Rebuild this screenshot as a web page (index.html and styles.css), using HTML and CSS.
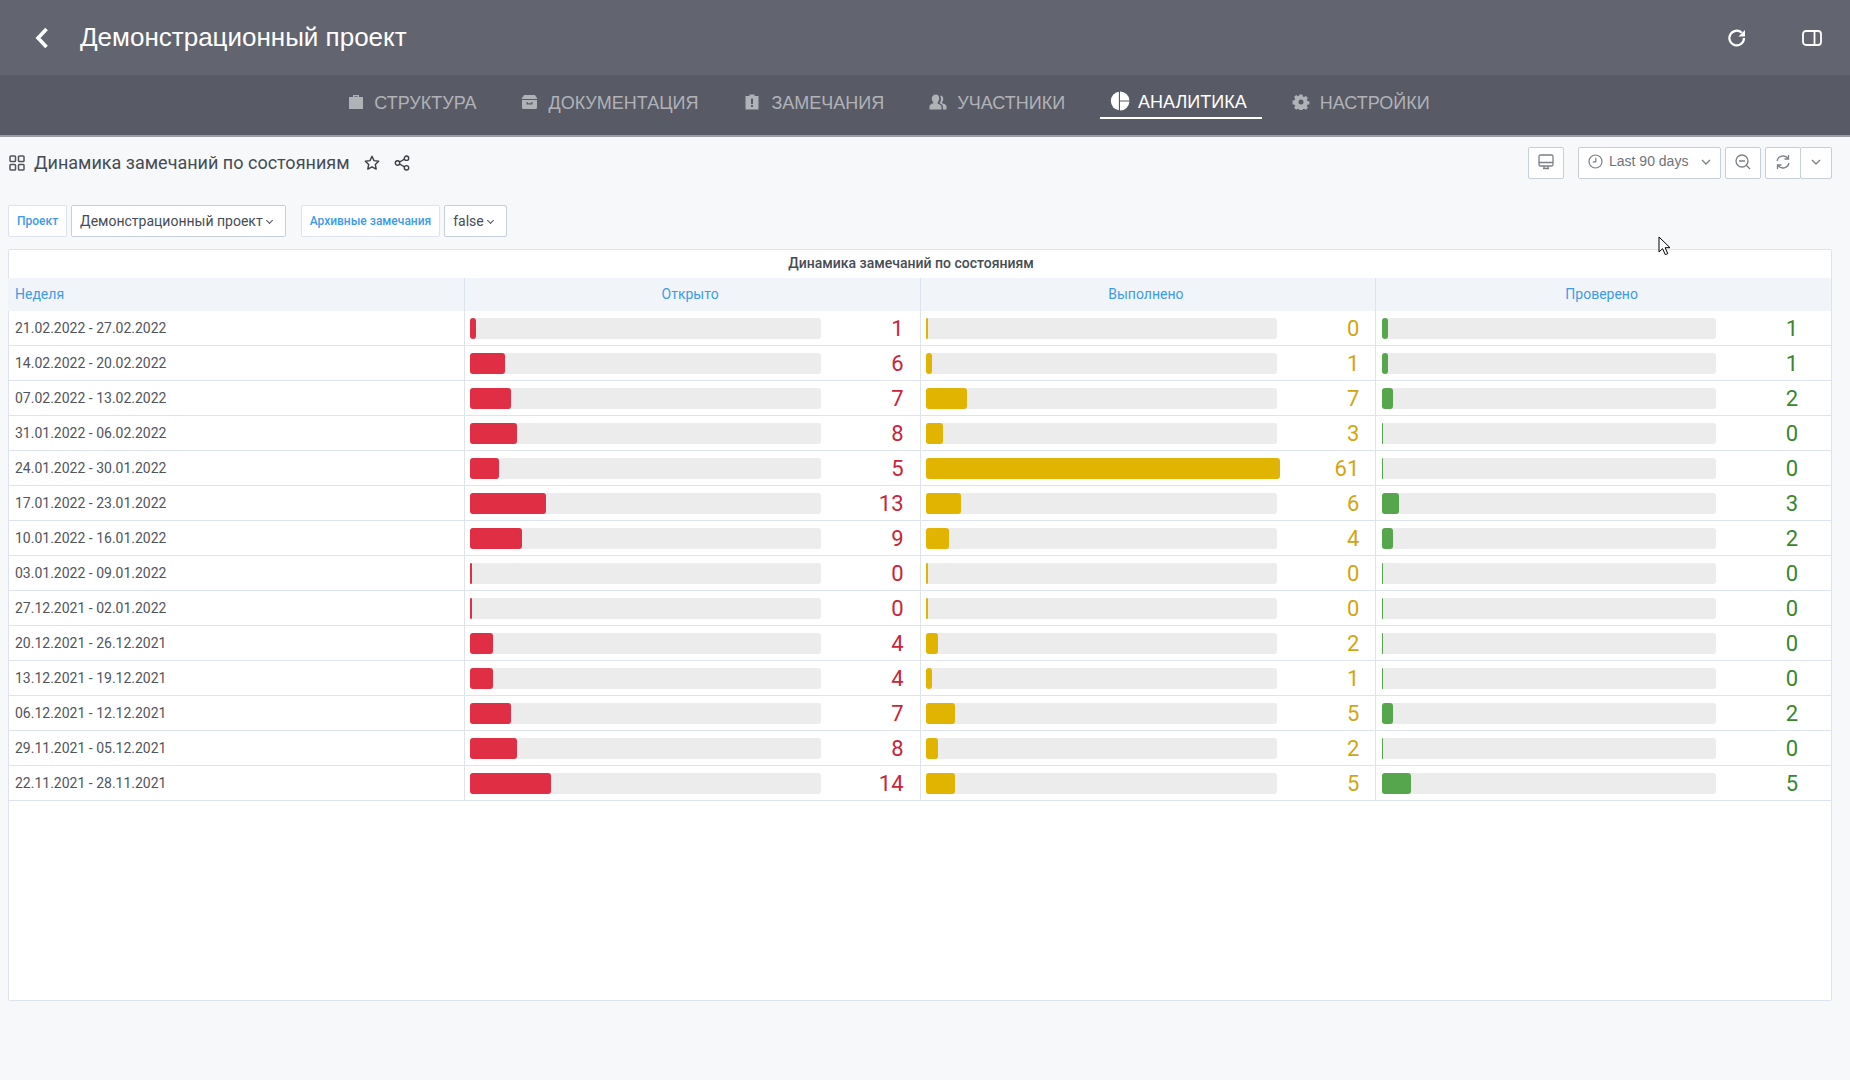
FILE: index.html
```html
<!DOCTYPE html>
<html>
<head>
	<title>Динамика замечаний по состояниям</title>
	<link rel="stylesheet" href="styles.css">
</head>
<body>
	<header class="topbar">
		<svg class="back" width="14" height="22" viewBox="0 0 14 22"><path d="M11.5 2 L3 11 L11.5 20" fill="none" stroke="#fff" stroke-width="3.6"/></svg>
		<h1 class="project-title">Демонстрационный проект</h1>
		<div class="topbar-actions">
			<svg width="20" height="20" viewBox="0 0 20 20"><path d="M17 10a7.300 7.300 0 1 1-2.200-5.200" fill="none" stroke="#fff" stroke-width="2.200"/><path d="M18 2v6.500h-6.500z" fill="#fff"/></svg>
			<svg width="20" height="16" viewBox="0 0 20 16"><rect x="1" y="1" width="18" height="14" rx="3" fill="none" stroke="#fff" stroke-width="1.8"/><path d="M12.5 1v14" stroke="#fff" stroke-width="1.8"/></svg>
		</div>
	</header>

	<nav class="tabs">
		<a class="tab">
			<svg width="16" height="16" viewBox="0 0 16 16"><path d="M5 3V1h6v2h4v12H1V3zM6.500 3h3V2.300h-3z" fill="#b1b2b8" fill-rule="evenodd"/></svg>
			СТРУКТУРА
		</a>
		<a class="tab">
			<svg width="17" height="16" viewBox="0 0 17 16"><path d="M3 1h11l2.500 4H.5zM1 6h15v7.500a1.500 1.500 0 0 1-1.500 1.500h-12A1.500 1.500 0 0 1 1 13.500zm4.500 2v2.500h6V8h-1.200v1.200H6.700V8z" fill="#b1b2b8" fill-rule="evenodd"/></svg>
			ДОКУМЕНТАЦИЯ
		</a>
		<a class="tab">
			<svg width="18" height="16" viewBox="0 0 18 16"><path d="M2.500 2h4V.5h5V2h4v13.500h-13zM8 4.500V10h2V4.500zM8 11v2h2v-2z" fill="#b1b2b8" fill-rule="evenodd"/></svg>
			ЗАМЕЧАНИЯ
		</a>
		<a class="tab">
			<svg width="18" height="16" viewBox="0 0 18 16"><path d="M7 .5c2 0 3.200 1.500 3.200 3.800 0 1.700-.6 3.200-1.500 4v1.400c2 .7 3.800 1.400 3.800 3.300v2.500H.5V12.500c0-1.900 1.800-2.600 3.800-3.300V8.300c-.9-.8-1.500-2.300-1.500-4C2.800 2 5 .5 7 .5z" fill="#b1b2b8"/><path d="M11.500 1.500c1.700 0 2.800 1.300 2.800 3.200 0 1.300-.5 2.600-1.200 3.200v1.300c1.800.6 4.400 1.300 4.400 3.300v3h-3.500v-2.500c0-2-1.500-3-3.300-3.800.8-1 1.300-2.500 1.300-4.100 0-.8-.1-1.500-.5-2.100z" fill="#b1b2b8"/></svg>
			УЧАСТНИКИ
		</a>
		<a class="tab active">
			<svg class="pie" width="20" height="20" viewBox="0 0 18 18"><path d="M8 .6A8.500 8.500 0 0 0 8 17.400z" fill="#fff"/><path d="M9 .5A8.500 8.500 0 0 1 17.500 8.500H9z" fill="#fff"/><path d="M9 9.500H17.500A8.500 8.500 0 0 1 9 17.500z" fill="#fff"/></svg>
			АНАЛИТИКА
		</a>
		<a class="tab">
			<svg width="18" height="16" viewBox="0 0 18 16"><path d="M7.600.5h2.800l.4 2 1.300.6 1.800-1.100 2 2-1.100 1.800.6 1.300 2 .4v2.800l-2 .4-.6 1.300 1.100 1.800-2 2-1.800-1.100-1.300.6-.4 2H7.600l-.4-2-1.300-.6-1.800 1.100-2-2 1.100-1.800-.6-1.300-2-.4V6.600l2-.4.6-1.300-1.100-1.800 2-2 1.800 1.100 1.300-.6zM9 5.500a2.500 2.500 0 1 0 0 5 2.500 2.500 0 0 0 0-5z" fill="#b1b2b8" fill-rule="evenodd"/></svg>
			НАСТРОЙКИ
		</a>
	</nav>

	<main class="dash">
		<div class="dash-head">
			<svg class="grid-icon" width="16" height="16" viewBox="0 0 16 16"><g fill="none" stroke="#52545c" stroke-width="1.500"><rect x="1" y="1" width="5.500" height="5.500" rx=".8"/><rect x="9.500" y="1" width="5.500" height="5.500" rx=".8"/><rect x="1" y="9.500" width="5.500" height="5.500" rx=".8"/><rect x="9.500" y="9.500" width="5.500" height="5.500" rx=".8"/></g></svg>
			<span class="dash-title">Динамика замечаний по состояниям</span>
			<svg class="star" width="16" height="16" viewBox="0 0 16 16"><path d="M8 1.300l2 4.300 4.700.6-3.400 3.200.9 4.700L8 11.800l-4.200 2.300.9-4.700L1.300 6.200 6 5.600z" fill="none" stroke="#3d3f47" stroke-width="1.400" stroke-linejoin="round"/></svg>
			<svg class="share" width="16" height="16" viewBox="0 0 16 16"><g fill="none" stroke="#3d3f47" stroke-width="1.400"><circle cx="3.500" cy="8" r="2.200"/><circle cx="12.500" cy="3.200" r="2.200"/><circle cx="12.500" cy="12.800" r="2.200"/><path d="M5.500 7l5-2.800M5.500 9l5 2.800"/></g></svg>

			<div class="toolbar">
				<button class="btn btn-icon">
					<svg width="16" height="16" viewBox="0 0 16 16"><g fill="none" stroke="#7b8087" stroke-width="1.300"><rect x="1" y="1" width="14" height="11" rx="1.500"/><path d="M1 8.500h14M5 14.500h6M6 12v2.500M10 12v2.500"/></g></svg>
				</button>
				<button class="btn btn-time">
					<svg width="15" height="15" viewBox="0 0 15 15"><circle cx="7.500" cy="7.500" r="6.500" fill="none" stroke="#7b8087" stroke-width="1.200"/><path d="M7.800 3.800v4H4.800" fill="none" stroke="#7b8087" stroke-width="1.200"/></svg>
					<span class="time-label">Last 90 days</span>
					<svg class="caret" width="10" height="6" viewBox="0 0 10 6"><path d="M1 1l4 4 4-4" fill="none" stroke="#7b8087" stroke-width="1.300"/></svg>
				</button>
				<button class="btn btn-icon">
					<svg width="16" height="16" viewBox="0 0 16 16"><g fill="none" stroke="#7b8087" stroke-width="1.300"><circle cx="7" cy="7" r="6"/><path d="M4 7h6M11.500 11.500l3.500 3.500"/></g></svg>
				</button>
				<div class="btn-group">
					<button class="btn btn-icon">
						<svg width="16" height="16" viewBox="0 0 16 16"><g fill="none" stroke="#7b8087" stroke-width="1.300"><path d="M2 7A6.200 6.200 0 0 1 13 4.500M14 9A6.200 6.200 0 0 1 3 11.500"/><path d="M13.500 1v4h-4M2.500 15v-4h4"/></g></svg>
					</button>
					<button class="btn btn-caret">
						<svg class="caret" width="10" height="6" viewBox="0 0 10 6"><path d="M1 1l4 4 4-4" fill="none" stroke="#7b8087" stroke-width="1.300"/></svg>
					</button>
				</div>
			</div>
		</div>

		<div class="vars">
			<span class="var-label">Проект</span>
			<span class="var-value var-project">Демонстрационный проект <i class="mini-caret"></i></span>
			<span class="var-label var-label-second">Архивные замечания</span>
			<span class="var-value var-false">false <i class="mini-caret"></i></span>
		</div>

		<section class="panel">
			<div class="panel-title">Динамика замечаний по состояниям</div>
			<div class="row head">
				<div class="cell week">Неделя</div>
				<div class="cell">Открыто</div>
				<div class="cell">Выполнено</div>
				<div class="cell">Проверено</div>
			</div>

			<div class="row">
				<div class="cell week">21.02.2022 - 27.02.2022</div>
				<div class="cell gauge red"><div class="track"><div class="fill" style="width:5.800px"></div></div><span class="val">1</span></div>
				<div class="cell gauge yellow"><div class="track"><div class="fill" style="width:1.500px"></div></div><span class="val">0</span></div>
				<div class="cell gauge green"><div class="track"><div class="fill" style="width:5.800px"></div></div><span class="val">1</span></div>
			</div>
			<div class="row">
				<div class="cell week">14.02.2022 - 20.02.2022</div>
				<div class="cell gauge red"><div class="track"><div class="fill" style="width:34.800px"></div></div><span class="val">6</span></div>
				<div class="cell gauge yellow"><div class="track"><div class="fill" style="width:5.800px"></div></div><span class="val">1</span></div>
				<div class="cell gauge green"><div class="track"><div class="fill" style="width:5.800px"></div></div><span class="val">1</span></div>
			</div>
			<div class="row">
				<div class="cell week">07.02.2022 - 13.02.2022</div>
				<div class="cell gauge red"><div class="track"><div class="fill" style="width:40.600px"></div></div><span class="val">7</span></div>
				<div class="cell gauge yellow"><div class="track"><div class="fill" style="width:40.600px"></div></div><span class="val">7</span></div>
				<div class="cell gauge green"><div class="track"><div class="fill" style="width:11.600px"></div></div><span class="val">2</span></div>
			</div>
			<div class="row">
				<div class="cell week">31.01.2022 - 06.02.2022</div>
				<div class="cell gauge red"><div class="track"><div class="fill" style="width:46.400px"></div></div><span class="val">8</span></div>
				<div class="cell gauge yellow"><div class="track"><div class="fill" style="width:17.400px"></div></div><span class="val">3</span></div>
				<div class="cell gauge green"><div class="track"><div class="fill" style="width:1.500px"></div></div><span class="val">0</span></div>
			</div>
			<div class="row">
				<div class="cell week">24.01.2022 - 30.01.2022</div>
				<div class="cell gauge red"><div class="track"><div class="fill" style="width:29px"></div></div><span class="val">5</span></div>
				<div class="cell gauge yellow"><div class="track"><div class="fill" style="width:354px"></div></div><span class="val">61</span></div>
				<div class="cell gauge green"><div class="track"><div class="fill" style="width:1.500px"></div></div><span class="val">0</span></div>
			</div>
			<div class="row">
				<div class="cell week">17.01.2022 - 23.01.2022</div>
				<div class="cell gauge red"><div class="track"><div class="fill" style="width:75.400px"></div></div><span class="val">13</span></div>
				<div class="cell gauge yellow"><div class="track"><div class="fill" style="width:34.800px"></div></div><span class="val">6</span></div>
				<div class="cell gauge green"><div class="track"><div class="fill" style="width:17.400px"></div></div><span class="val">3</span></div>
			</div>
			<div class="row">
				<div class="cell week">10.01.2022 - 16.01.2022</div>
				<div class="cell gauge red"><div class="track"><div class="fill" style="width:52.200px"></div></div><span class="val">9</span></div>
				<div class="cell gauge yellow"><div class="track"><div class="fill" style="width:23.200px"></div></div><span class="val">4</span></div>
				<div class="cell gauge green"><div class="track"><div class="fill" style="width:11.600px"></div></div><span class="val">2</span></div>
			</div>
			<div class="row">
				<div class="cell week">03.01.2022 - 09.01.2022</div>
				<div class="cell gauge red"><div class="track"><div class="fill" style="width:1.500px"></div></div><span class="val">0</span></div>
				<div class="cell gauge yellow"><div class="track"><div class="fill" style="width:1.500px"></div></div><span class="val">0</span></div>
				<div class="cell gauge green"><div class="track"><div class="fill" style="width:1.500px"></div></div><span class="val">0</span></div>
			</div>
			<div class="row">
				<div class="cell week">27.12.2021 - 02.01.2022</div>
				<div class="cell gauge red"><div class="track"><div class="fill" style="width:1.500px"></div></div><span class="val">0</span></div>
				<div class="cell gauge yellow"><div class="track"><div class="fill" style="width:1.500px"></div></div><span class="val">0</span></div>
				<div class="cell gauge green"><div class="track"><div class="fill" style="width:1.500px"></div></div><span class="val">0</span></div>
			</div>
			<div class="row">
				<div class="cell week">20.12.2021 - 26.12.2021</div>
				<div class="cell gauge red"><div class="track"><div class="fill" style="width:23.200px"></div></div><span class="val">4</span></div>
				<div class="cell gauge yellow"><div class="track"><div class="fill" style="width:11.600px"></div></div><span class="val">2</span></div>
				<div class="cell gauge green"><div class="track"><div class="fill" style="width:1.500px"></div></div><span class="val">0</span></div>
			</div>
			<div class="row">
				<div class="cell week">13.12.2021 - 19.12.2021</div>
				<div class="cell gauge red"><div class="track"><div class="fill" style="width:23.200px"></div></div><span class="val">4</span></div>
				<div class="cell gauge yellow"><div class="track"><div class="fill" style="width:5.800px"></div></div><span class="val">1</span></div>
				<div class="cell gauge green"><div class="track"><div class="fill" style="width:1.500px"></div></div><span class="val">0</span></div>
			</div>
			<div class="row">
				<div class="cell week">06.12.2021 - 12.12.2021</div>
				<div class="cell gauge red"><div class="track"><div class="fill" style="width:40.600px"></div></div><span class="val">7</span></div>
				<div class="cell gauge yellow"><div class="track"><div class="fill" style="width:29px"></div></div><span class="val">5</span></div>
				<div class="cell gauge green"><div class="track"><div class="fill" style="width:11.600px"></div></div><span class="val">2</span></div>
			</div>
			<div class="row">
				<div class="cell week">29.11.2021 - 05.12.2021</div>
				<div class="cell gauge red"><div class="track"><div class="fill" style="width:46.400px"></div></div><span class="val">8</span></div>
				<div class="cell gauge yellow"><div class="track"><div class="fill" style="width:11.600px"></div></div><span class="val">2</span></div>
				<div class="cell gauge green"><div class="track"><div class="fill" style="width:1.500px"></div></div><span class="val">0</span></div>
			</div>
			<div class="row">
				<div class="cell week">22.11.2021 - 28.11.2021</div>
				<div class="cell gauge red"><div class="track"><div class="fill" style="width:81.200px"></div></div><span class="val">14</span></div>
				<div class="cell gauge yellow"><div class="track"><div class="fill" style="width:29px"></div></div><span class="val">5</span></div>
				<div class="cell gauge green"><div class="track"><div class="fill" style="width:29px"></div></div><span class="val">5</span></div>
			</div>
		</section>
	</main>

	<svg class="cursor" width="14" height="20" viewBox="0 0 14 20"><path d="M1 1v15l3.600-3.300 2.700 6 2.500-1.100-2.700-5.900H12z" fill="#fff" stroke="#000" stroke-width="1"/></svg>
</body>
</html>
```

FILE: styles.css
```css
* {
	box-sizing: border-box;
}

body {
	margin: 0;
	height: 1080px;
	overflow: hidden;
	background-color: #f7f8fa;
	color: #52545c;
	font-family: Roboto, "Liberation Sans", sans-serif;
	font-size: 14px;
}

/* top bars */
.topbar {
	display: flex;
	align-items: center;
	height: 75px;
	padding: 0 28px 0 35px;
	background-color: #62656f;
	color: #fff;
}

.project-title {
	margin: 0 0 0 31px;
	font-family: "Liberation Sans", Arial, sans-serif;
	font-size: 26px;
	font-weight: normal;
}

.topbar-actions {
	display: flex;
	align-items: center;
	gap: 55px;
	margin-left: auto;
}

.tabs {
	display: flex;
	justify-content: center;
	align-items: flex-start;
	gap: 20px;
	height: 62px;
	padding: 12px 67px 0 0;
	background-color: #585b65;
	border-bottom: 2px solid #9a9aa0;
}

.tab {
	display: flex;
	align-items: center;
	gap: 10px;
	height: 32px;
	padding: 0 15px 0 10px;
	color: #b1b2b8;
	font-family: "Liberation Sans", Arial, sans-serif;
	font-size: 18px;
}

.tab svg {
	margin-top: -2px;
}

.tab .pie {
	margin-right: -2px;
}

.tab.active {
	color: #fff;
	border-bottom: 2px solid #fff;
}

/* dashboard head */
.dash {
	padding: 0 18px 0 8px;
}

.dash-head {
	display: flex;
	align-items: center;
	height: 51px;
}

.grid-icon {
	margin: 0 9px 0 1px;
}

.dash-title {
	font-size: 18px;
	color: #464c54;
	margin-right: 14px;
}

.share {
	margin-left: 14px;
}

.toolbar {
	display: flex;
	gap: 4px;
	margin-left: auto;
}

.btn {
	display: flex;
	align-items: center;
	justify-content: center;
	height: 32px;
	padding: 0 0 2px;
	background-color: #fff;
	border: 1px solid #c7d0d9;
	border-radius: 2px;
}

.btn-icon {
	width: 36px;
}

.btn-caret {
	width: 32px;
}

.toolbar > .btn-icon:first-child {
	margin-right: 10px;
}

.btn-time {
	width: 143px;
	padding: 0 9px 2px;
	gap: 6px;
}

.time-label {
	margin: -2px auto 0 0;
	color: #6e737b;
	font-size: 14px;
	font-weight: 500;
}

.btn-group {
	display: flex;
}

.btn-group .btn + .btn {
	margin-left: -1px;
}

/* variables */
.vars {
	display: flex;
	height: 32px;
	margin-top: 17px;
	font-size: 14px;
}

.var-label,
.var-value {
	display: flex;
	align-items: center;
	background-color: #fff;
	border-radius: 2px;
}

.var-label {
	padding: 0 8px;
	margin-right: 4px;
	color: #3d9be9;
	font-size: 12px;
	font-weight: 500;
	border: 1px solid #dde4ed;
}

.var-label-second {
	margin-left: 15px;
}

.var-value {
	gap: 4px;
	padding: 0 13px 0 8px;
	color: #464c54;
	border: 1px solid #c7d0d9;
}

.mini-caret {
	width: 5px;
	height: 5px;
	margin-top: -2px;
	border-right: 1px solid #52545c;
	border-bottom: 1px solid #52545c;
	transform: rotate(45deg);
}

/* table panel */
.panel {
	height: 752px;
	margin-top: 12px;
	background-color: #fff;
	border: 1px solid #dde4ed;
	border-radius: 2px;
}

.panel-title {
	height: 28px;
	padding-right: 18px;
	line-height: 26px;
	text-align: center;
	font-weight: 500;
	color: #464c54;
}

.row {
	display: grid;
	grid-template-columns: repeat(4, 1fr);
	height: 35px;
	margin-left: -1px;
	border-bottom: 1px solid #dde4ed;
}

.row.head {
	height: 33px;
	background-color: #f1f5f9;
	border-bottom: 0;
	color: #3d9be9;
	text-align: center;
}

.row.head .cell {
	padding: 0 10px 1px 6px;
}

.cell {
	display: flex;
	align-items: center;
	justify-content: center;
	padding: 0 6px;
	border-left: 1px solid #dde4ed;
}

.cell.week,
.row.head .cell.week {
	justify-content: flex-start;
	padding-left: 7px;
	border-left: 0;
}

.cell.gauge {
	justify-content: flex-start;
	padding: 0 16px 0 5.5px;
}

.track {
	flex: none;
	width: 350.500px;
	height: 21px;
	background-color: #ececec;
	border-radius: 3px;
}

.fill {
	height: 100%;
	border-radius: 3px;
}

.val {
	flex: 1;
	padding-top: 1px;
	text-align: right;
	font-size: 22px;
}

.cell.gauge:last-child {
	padding-right: 33px;
}

.cell.gauge:last-child .track {
	width: 334px;
}

.red .fill { background-color: #e02f44; }
.red .val { color: #c9243a; }
.yellow .fill { background-color: #e0b400; }
.yellow .val { color: #d4a50f; }
.green .fill { background-color: #56a64b; }
.green .val { color: #37872d; }

.cursor {
	position: absolute;
	left: 1658px;
	top: 236px;
}
```
